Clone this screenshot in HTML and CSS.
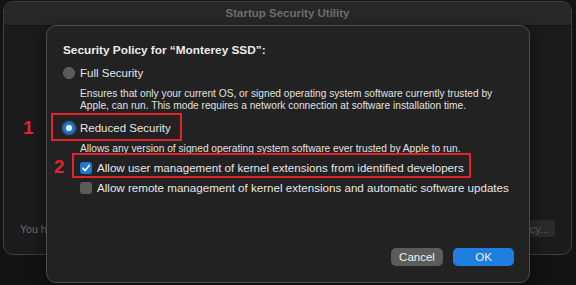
FILE: index.html
```html
<!DOCTYPE html>
<html lang="en">
<head>
    <meta charset="UTF-8">
    <meta name="viewport" content="width=device-width, initial-scale=1.0">
    <title>Startup Security Utility</title>
    <link rel="stylesheet" href="styles.css">
</head>
<body>
    <div class="screen">
        <!-- window behind the sheet -->
        <div class="window">
            <div class="titlebar">Startup Security Utility</div>
            <div class="window-body">
                <p class="hint">You have to authenticate to change the security policy.</p>
                <button class="ghost-btn">Security Policy...</button>
            </div>
        </div>

        <!-- the sheet itself -->
        <div class="sheet">
            <h1>Security Policy for “Monterey SSD”:</h1>

            <label class="option">
                <span class="radio"></span>
                <span>Full Security</span>
            </label>
            <p class="desc">Ensures that only your current OS, or signed operating system software currently trusted by Apple, can run. This mode requires a network connection at software installation time.</p>

            <label class="option">
                <span class="radio on"></span>
                <span>Reduced Security</span>
            </label>
            <p class="desc">Allows any version of signed operating system software ever trusted by Apple to run.</p>

            <div class="checks">
                <label class="check-row">
                    <span class="box on">
                        <svg width="10" height="10" viewBox="0 0 10 10"><path d="M2 5.3 L4.2 7.6 L8.2 2.4" fill="none" stroke="#fff" stroke-width="1.7" stroke-linecap="round" stroke-linejoin="round"/></svg>
                    </span>
                    <span>Allow user management of kernel extensions from identified developers</span>
                </label>
                <label class="check-row">
                    <span class="box"></span>
                    <span>Allow remote management of kernel extensions and automatic software updates</span>
                </label>
            </div>

            <div class="actions">
                <button class="btn cancel">Cancel</button>
                <button class="btn ok">OK</button>
            </div>
        </div>

        <!-- red annotations -->
        <span class="mark mark-1">1</span>
        <span class="frame frame-1"></span>
        <span class="mark mark-2">2</span>
        <span class="frame frame-2"></span>
    </div>
</body>
</html>
```

FILE: styles.css
```css
body {
    margin: 0;
    background-color: #131313;
    font-family: "Liberation Sans", Arial, sans-serif;
    color: #e6e6e6;
    overflow: hidden;
}

.screen {
    position: relative;
    width: 576px;
    height: 285px;
    padding: 1px 4px 0 3px;
    box-sizing: border-box;
}

.window {
    height: 252px;
    border: 1px solid #3f3f3f;
    border-radius: 10px;
    background-color: #1b1b1b;
    overflow: hidden;
    display: flex;
    flex-direction: column;
}

.titlebar {
    height: 23px;
    flex: none;
    background-color: #282828;
    border-bottom: 1px solid #151515;
    color: #707070;
    font-size: 11.5px;
    font-weight: bold;
    text-align: center;
    line-height: 22px;
}

.window-body {
    flex: 1;
    display: flex;
    align-items: flex-end;
    justify-content: space-between;
    padding: 0 16px 17px 16px;
}

.hint {
    margin: 0 0 2px 0;
    color: #707070;
    font-size: 10.5px;
}

.ghost-btn {
    border: none;
    border-radius: 4px;
    background-color: #2b2b2b;
    color: #5f5f5f;
    font-family: inherit;
    font-size: 11px;
    height: 17px;
    padding: 0 6px;
}

.sheet {
    position: absolute;
    left: 46px;
    top: 25px;
    width: 484px;
    height: 258px;
    box-sizing: border-box;
    background-color: #222222;
    border: 1px solid #4d4d4d;
    border-radius: 10px;
    box-shadow: 0 4px 18px rgba(0, 0, 0, 0.5);
    padding: 16px 15px 0 16px;
}

h1 {
    margin: 0 0 6px 0;
    font-size: 11.8px;
    line-height: 17px;
    font-weight: bold;
    color: #ececec;
}

.option {
    display: flex;
    align-items: center;
    gap: 5px;
    font-size: 11.5px;
    line-height: 16px;
}

.radio {
    width: 12px;
    height: 12px;
    border-radius: 50%;
    background-color: #5b5b5b;
    box-sizing: border-box;
    border: 1px solid #666;
    flex: none;
}

.radio.on {
    background-color: #ffffff;
    border: 3.5px solid #1f77d4;
    box-shadow: 0 0 0 1.5px rgba(40, 120, 210, 0.55);
}

.desc {
    max-width: 420px;
    margin: 7px 0 8px 17px;
    font-size: 10.2px;
    line-height: 12px;
    color: #e0e0e0;
}

.checks {
    margin: -2px 0 0 17px;
    display: flex;
    flex-direction: column;
    gap: 7px;
}

.check-row {
    display: flex;
    align-items: center;
    gap: 5px;
    font-size: 11.6px;
    line-height: 13px;
}

.box {
    width: 12px;
    height: 12px;
    border-radius: 3px;
    background-color: #5b5b5b;
    flex: none;
    display: flex;
    align-items: center;
    justify-content: center;
}

.box.on {
    background-color: #1f77d4;
}

.actions {
    position: absolute;
    right: 15px;
    bottom: 16px;
    display: flex;
    gap: 10px;
}

.btn {
    height: 18px;
    border: none;
    border-radius: 5px;
    color: #f0f0f0;
    font-family: inherit;
    font-size: 11.5px;
    padding: 0;
}

.cancel {
    width: 52px;
    background-color: #5c5c5c;
}

.ok {
    width: 61px;
    background-color: #1f7fde;
}

.mark {
    position: absolute;
    color: #e0242a;
    font-weight: bold;
    font-size: 19px;
    line-height: 19px;
}

.mark-1 {
    left: 23px;
    top: 118px;
}

.mark-2 {
    left: 54px;
    top: 157px;
}

.frame {
    position: absolute;
    border: 2.5px solid #e0242a;
    box-sizing: border-box;
}

.frame-1 {
    left: 51px;
    top: 113px;
    width: 131px;
    height: 28px;
}

.frame-2 {
    left: 72px;
    top: 153px;
    width: 399px;
    height: 25px;
}
```
